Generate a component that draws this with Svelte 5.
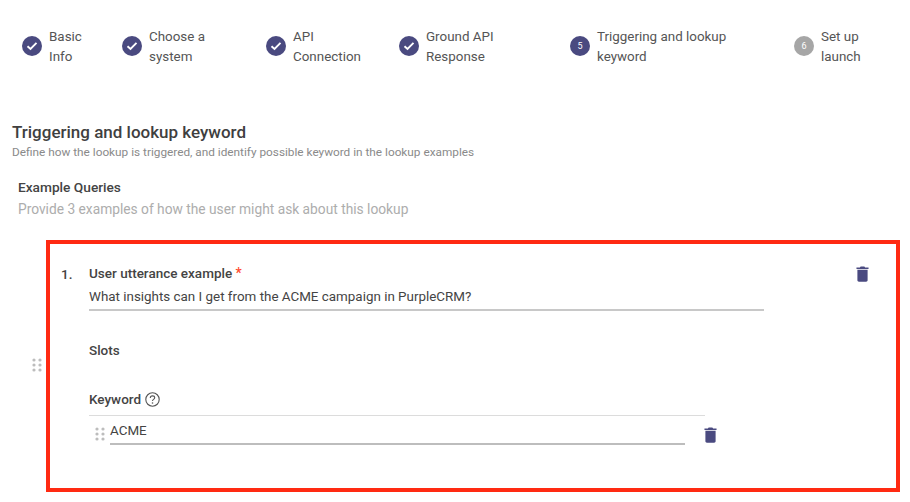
<script lang="ts">
  // Wizard step 5: lookup keyword setup.
  const steps = [
    { n: 1, label: ["Basic", "Info"], state: "done" },
    { n: 2, label: ["Choose a", "system"], state: "done" },
    { n: 3, label: ["API", "Connection"], state: "done" },
    { n: 4, label: ["Ground API", "Response"], state: "done" },
    { n: 5, label: ["Triggering and lookup", "keyword"], state: "active" },
    { n: 6, label: ["Set up", "launch"], state: "todo" },
  ];
</script>

{#snippet grip()}
  <svg class="grip" width="10" height="14" viewBox="0 0 10 14" aria-hidden="true">
    {#each [2, 7, 12] as y}
      <circle cx="2" cy={y} r="1.6" />
      <circle cx="8" cy={y} r="1.6" />
    {/each}
  </svg>
{/snippet}

{#snippet trash()}
  <svg class="trash" width="13" height="16" viewBox="0 0 14 17" aria-hidden="true">
    <path d="M5 0.5h4l.8 1H13.500v1.500H.5V1.500h3.700z" />
    <path d="M1.500 4h11v11.200c0 .9-.7 1.600-1.600 1.600H3.100c-.9 0-1.600-.7-1.600-1.600z" />
  </svg>
{/snippet}

<div class="page">
  <ol class="steps">
    {#each steps as s (s.n)}
      <li class="step">
        <span class="badge {s.state}">
          {#if s.state === "done"}
            <svg width="12" height="10" viewBox="0 0 12 10" aria-hidden="true">
              <path d="M1.500 5.200 4.500 8 10.500 1.800" fill="none" stroke="#fff" stroke-width="1.900" />
            </svg>
          {:else}
            {s.n}
          {/if}
        </span>
        <span class="label">{s.label[0]}<br />{s.label[1]}</span>
      </li>
    {/each}
  </ol>

  <section class="intro">
    <h1>Triggering and lookup keyword</h1>
    <p class="lead">Define how the lookup is triggered, and identify possible keyword in the lookup examples</p>
    <h2>Example Queries</h2>
    <p class="hint">Provide 3 examples of how the user might ask about this lookup</p>
  </section>

  <div class="query-row">
    <span class="row-grip">{@render grip()}</span>
    <div class="card">
      <span class="num">1.</span>
      <div class="fields">
        <div class="label-strong">User utterance example <span class="req">*</span></div>
        <div class="utterance">What insights can I get from the ACME campaign in PurpleCRM?</div>
        <div class="label-strong slots">Slots</div>
        <div class="label-strong keyword">
          Keyword
          <svg width="15" height="15" viewBox="0 0 15 15" aria-hidden="true">
            <circle cx="7.500" cy="7.500" r="6.700" fill="none" stroke="#555" stroke-width="1.100" />
            <path d="M5.300 5.900c0-1.300 1-2 2.200-2s2.200.7 2.200 1.900c0 1.600-2.200 1.500-2.200 3.200" fill="none" stroke="#555" stroke-width="1.100" />
            <circle cx="7.500" cy="11" r=".8" fill="#555" />
          </svg>
        </div>
        <div class="slot-list">
          {@render grip()}
          <div class="slot-value">ACME</div>
          <span class="slot-trash">{@render trash()}</span>
        </div>
      </div>
      <span class="card-trash">{@render trash()}</span>
    </div>
  </div>
</div>

<style>
  :global(body) {
    margin: 0;
    background: #fff;
  }
  .page {
    width: 910px;
    height: 502px;
    overflow: hidden;
    font-family: Roboto, "Liberation Sans", sans-serif;
    color: #444;
  }
  .steps {
    list-style: none;
    margin: 0;
    padding: 26px 0 0 22px;
    display: grid;
    grid-template-columns: 100px 144px 133px 171px 224px 1fr;
  }
  .step {
    display: flex;
    align-items: flex-start;
    gap: 7px;
  }
  .badge {
    flex: none;
    width: 20px;
    height: 20px;
    margin-top: 10px;
    border-radius: 50%;
    background: #4a4a80;
    color: #fff;
    font-size: 9px;
    display: flex;
    align-items: center;
    justify-content: center;
  }
  .badge.todo {
    background: #a6a6a6;
  }
  .label {
    margin-top: 1px;
    font-size: 13.4px;
    line-height: 20px;
    color: #555;
  }
  .intro {
    padding: 55px 0 0 12px;
  }
  h1 {
    margin: 0;
    font-size: 17px;
    line-height: 20px;
    font-weight: 500;
    color: #3f3f3f;
  }
  .lead {
    margin: 3px 0 0;
    font-size: 11.8px;
    line-height: 14px;
    color: #8a8a8a;
  }
  h2 {
    margin: 20px 0 0 6px;
    font-size: 13.7px;
    line-height: 16px;
    font-weight: 500;
    color: #444;
  }
  .hint {
    margin: 5px 0 0 6px;
    font-size: 13.75px;
    line-height: 18px;
    color: #adadad;
  }
  .query-row {
    display: flex;
    align-items: center;
    margin-top: 22px;
  }
  .row-grip {
    width: 46px;
    padding: 0 0 0 32px;
    box-sizing: border-box;
    display: flex;
    margin-top: -2px;
  }
  .grip {
    fill: #bdbdbd;
    flex: none;
  }
  .card {
    flex: none;
    width: 854px;
    height: 252px;
    box-sizing: border-box;
    border: 4px solid #ff2a12;
    padding: 21px 0 0 11px;
    display: flex;
  }
  .num {
    width: 28px;
    flex: none;
    font-size: 13.5px;
    line-height: 16px;
    font-weight: 500;
    margin-top: 1px;
  }
  .fields {
    width: 675px;
    flex: none;
  }
  .label-strong {
    font-size: 13.5px;
    line-height: 16px;
    font-weight: 500;
    color: #444;
  }
  .req {
    color: #ff4a2e;
    font-size: 14px;
  }
  .utterance {
    margin-top: 7px;
    font-size: 13.4px;
    line-height: 18px;
    padding-bottom: 3px;
    border-bottom: 2px solid #c8c8c8;
    color: #444;
  }
  .slots {
    margin-top: 31px;
  }
  .keyword {
    margin-top: 33px;
    display: flex;
    align-items: center;
    gap: 4px;
  }
  .slot-list {
    width: 610px;
    margin-top: 8px;
    border-top: 1px solid #dcdcdc;
    padding: 6px 0 0 6px;
    display: flex;
    align-items: center;
    gap: 5px;
    position: relative;
  }
  .slot-value {
    width: 575px;
    flex: none;
    font-size: 13.4px;
    line-height: 18px;
    color: #444;
    padding-bottom: 3px;
    border-bottom: 2px solid #bdbdbd;
  }
  .slot-trash {
    display: flex;
    flex: none;
    margin: 2px 0 0 14px;
  }
  .card-trash {
    display: flex;
    align-self: flex-start;
    margin: 1px 0 0 92px;
  }
  .trash {
    fill: #4a4a80;
    flex: none;
  }
</style>
